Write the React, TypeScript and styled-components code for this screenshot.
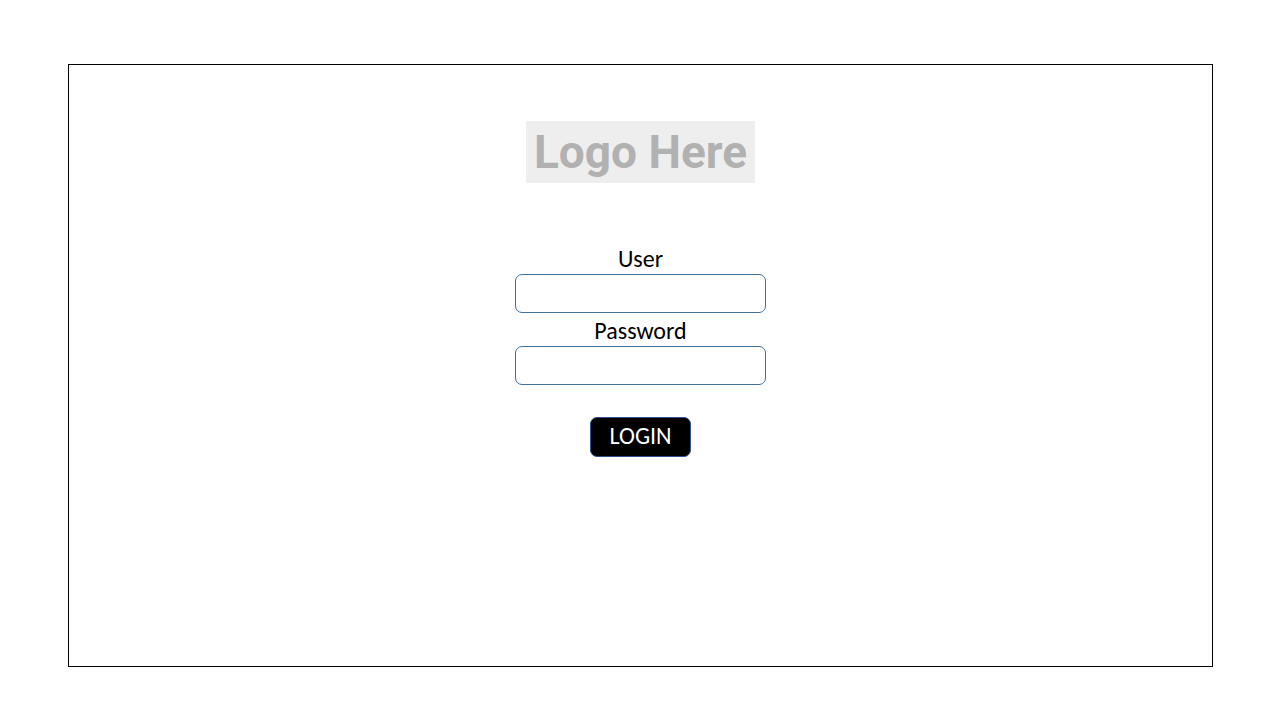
import React from "react";
import styled, { createGlobalStyle } from "styled-components";

const GlobalStyle = createGlobalStyle`
  *, *::before, *::after { box-sizing: border-box; }
  body {
    margin: 0;
    background: #ffffff;
    color: #000000;
    font-family: Carlito, Calibri, "Open Sans", "Noto Sans", sans-serif;
  }
`;

const Page = styled.div`
  display: flex;
  min-height: 100vh;
  padding: 64px 67px 53px 68px;
`;

const Frame = styled.main`
  display: flex;
  flex: 1;
  flex-direction: column;
  align-items: center;
  padding-top: 56px;
  border: 1px solid #000000;
`;

const Logo = styled.div`
  display: flex;
  align-items: center;
  justify-content: center;
  width: 229px;
  height: 62px;
  background: #eeeeee;
  color: #b1b1b1;
  font-family: Roboto, sans-serif;
  font-size: 46px;
  font-weight: 700;
  line-height: 62px;
  white-space: nowrap;
`;

const Form = styled.form`
  display: flex;
  flex-direction: column;
  align-items: center;
  margin-top: 62px;
`;

const Field = styled.div`
  display: flex;
  flex-direction: column;
  align-items: center;
  margin-bottom: 4px;
`;

const Label = styled.label`
  padding-bottom: 2px;
  font-size: 24px;
  line-height: 27px;
`;

const Input = styled.input`
  width: 251px;
  height: 39px;
  padding: 0 12px;
  border: 1px solid #41719c;
  border-radius: 7px;
  background: #ffffff;
  font: inherit;
  font-size: 24px;
`;

const LoginButton = styled.button`
  width: 101px;
  height: 40px;
  margin-top: 28px;
  padding: 0 0 2px;
  border: 1px solid #2f528f;
  border-radius: 7px;
  background: #000000;
  color: #ffffff;
  font-family: inherit;
  font-size: 24px;
  line-height: 36px;
`;

export default function App() {
  return (
    <>
      <GlobalStyle />
      <Page>
        <Frame>
          <Logo>Logo Here</Logo>
          <Form onSubmit={(event) => event.preventDefault()}>
            <Field>
              <Label htmlFor="user">User</Label>
              <Input id="user" type="text" autoComplete="username" />
            </Field>
            <Field>
              <Label htmlFor="password">Password</Label>
              <Input id="password" type="password" autoComplete="current-password" />
            </Field>
            <LoginButton type="submit">LOGIN</LoginButton>
          </Form>
        </Frame>
      </Page>
    </>
  );
}
